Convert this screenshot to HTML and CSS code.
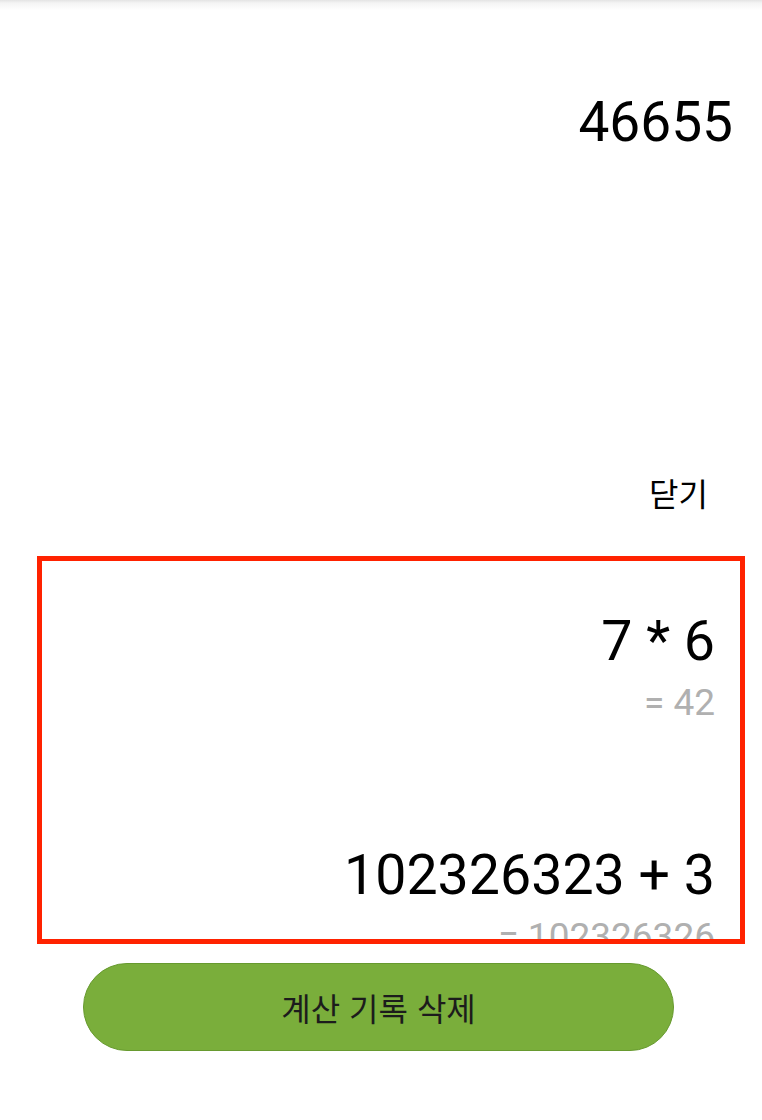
FILE: index.html
```html
<!DOCTYPE html>
<html lang="ko">
<head>
<meta charset="utf-8">
<title>계산기</title>
<link rel="stylesheet" href="styles.css">
</head>
<body>
<div class="screen">
  <div class="display">46655</div>
  <div class="close-row"><span class="close">닫기</span></div>
  <div class="history">
    <div class="item">
      <div class="expr">7 * 6</div>
      <div class="result">= 42</div>
    </div>
    <div class="item">
      <div class="expr">102326323 + 3</div>
      <div class="result">= 102326326</div>
    </div>
  </div>
  <div class="actions">
    <button class="clear-btn">계산 기록 삭제</button>
  </div>
</div>
</body>
</html>
```

FILE: styles.css
```css
html, body {
  margin: 0;
  padding: 0;
  background: #ffffff;
}

.screen {
  width: 762px;
  height: 1120px;
  display: flex;
  flex-direction: column;
  background: linear-gradient(to bottom, #e4e4e4 0px, #f4f4f4 3px, #ffffff 10px);
  font-family: Roboto, "Noto Sans CJK KR", sans-serif;
  overflow: hidden;
}

.display {
  padding: 89px 29px 0 0;
  text-align: right;
  font-size: 55px;
  line-height: 66px;
  color: #000;
}

.close-row {
  display: flex;
  justify-content: flex-end;
  padding: 314px 54px 0 0;
}

.close {
  font-family: "Noto Sans CJK KR", sans-serif;
  font-size: 32px;
  line-height: 46px;
  color: #000;
}

.history {
  margin: 41px 0 0 37px;
  width: 698px;
  height: 378px;
  border: 5px solid #ff2200;
  overflow: hidden;
  display: flex;
  flex-direction: column;
}

.item {
  padding: 48px 25px 71px 0;
  text-align: right;
  display: flex;
  flex-direction: column;
  gap: 7px;
}

.expr {
  font-size: 55.5px;
  line-height: 66px;
  color: #000;
  white-space: nowrap;
}

.result {
  font-size: 37px;
  line-height: 42px;
  color: #b0b0b0;
  white-space: nowrap;
}

.actions {
  display: flex;
  padding: 19px 0 0 83px;
}

.clear-btn {
  width: 591px;
  height: 88px;
  border: 1.5px solid #679a2f;
  border-radius: 44px;
  background: #7aae3b;
  color: #1c1c1c;
  font-family: "Noto Sans CJK KR", sans-serif;
  font-size: 32px;
  padding: 0;
}
```
